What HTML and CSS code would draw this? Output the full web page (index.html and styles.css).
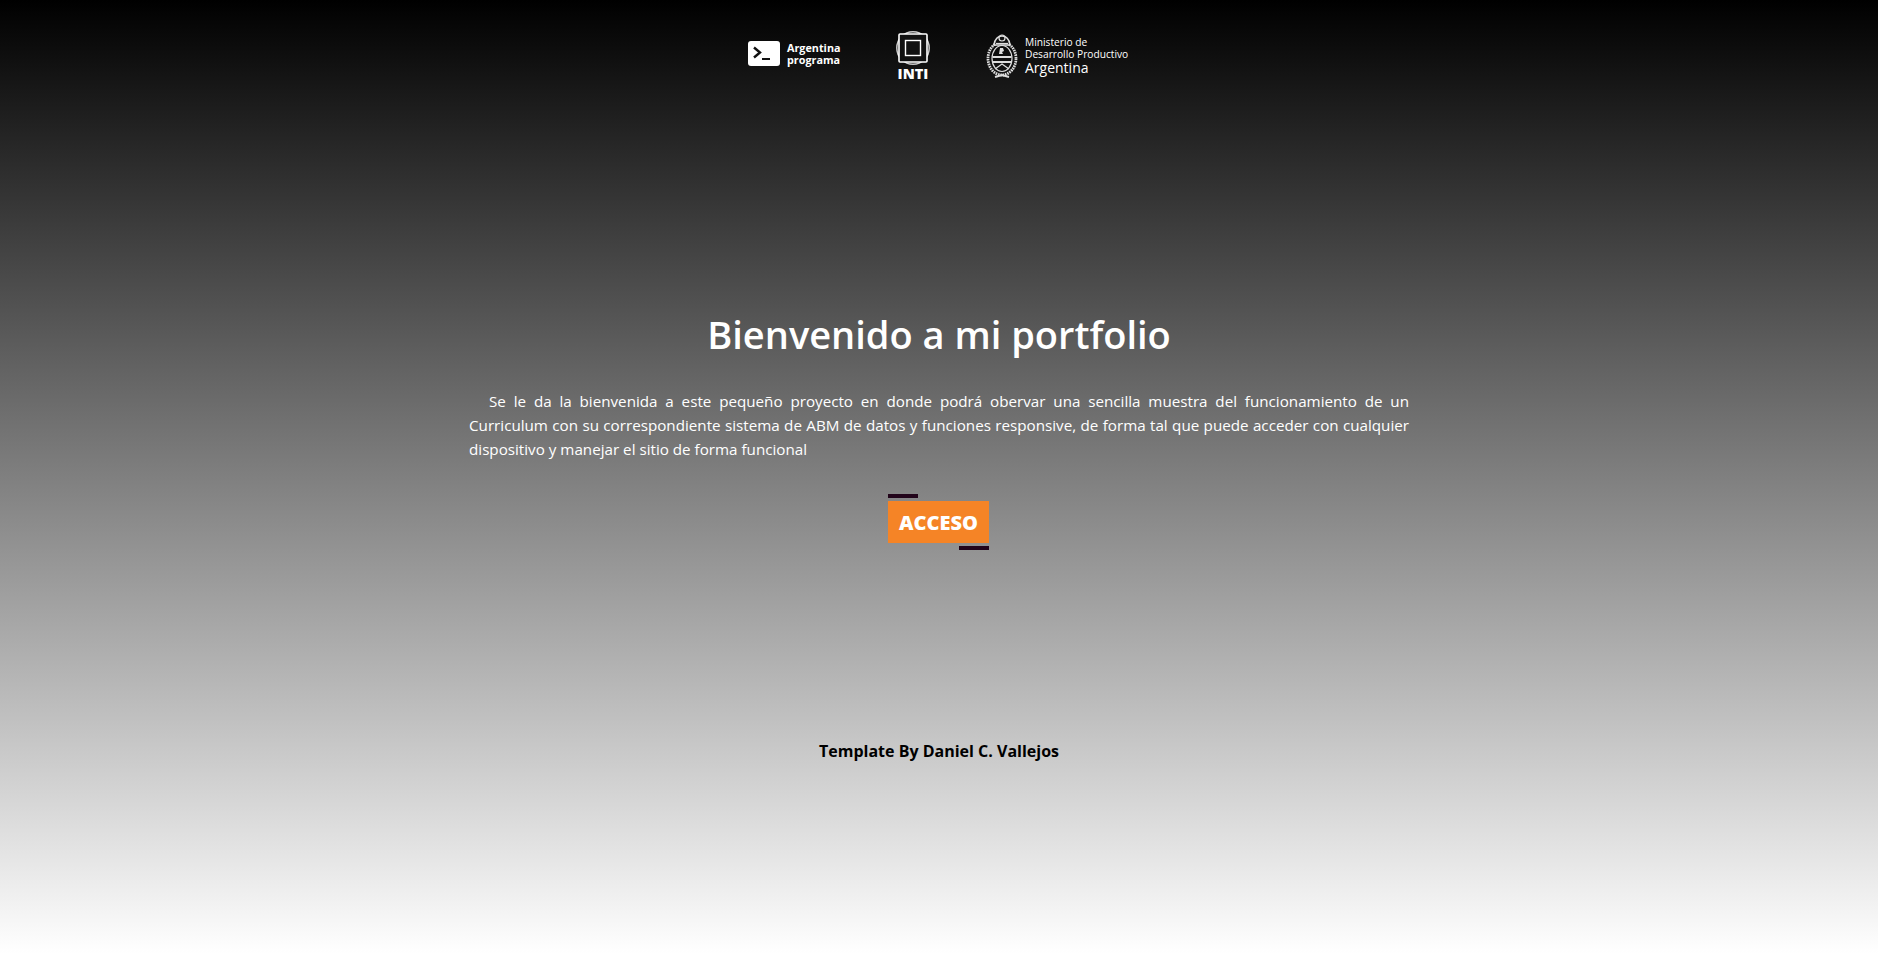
FILE: index.html
```html
<!DOCTYPE html>
<html lang="es">
<head>
<meta charset="utf-8">
<title>Bienvenido a mi portfolio</title>
<link rel="stylesheet" href="styles.css">
</head>
<body>
<header class="logos">
  <div class="logo logo-ap">
    <svg class="ap-icon" width="32" height="25" viewBox="0 0 32 25"><rect width="32" height="25" rx="3" fill="#fff"/><path d="M6 6.5l6 5-6 5" fill="none" stroke="#111" stroke-width="2.4"/><path d="M14 18h8" stroke="#111" stroke-width="2"/></svg>
    <span class="ap-text">Argentina<br>programa</span>
  </div>
  <div class="logo logo-inti">
    <svg width="34" height="34" viewBox="0 0 34 34" fill="none" stroke="#fff"><circle cx="17" cy="17" r="16.2" stroke="#ccc" stroke-width="1.5"/><rect x="3" y="3" width="28" height="28" rx="1" fill="#111" stroke-width="1.6"/><rect x="9.5" y="9.5" width="15" height="15" stroke-width="1.4"/></svg>
    <span class="inti-text">INTI</span>
  </div>
  <div class="logo logo-min">
    <svg width="32" height="49" viewBox="0 0 32 49" fill="none" stroke="#ddd"><ellipse cx="16" cy="27.5" rx="14" ry="16.5" stroke-width="2.8" stroke-dasharray="1.6 0.8"/><ellipse cx="16" cy="27.5" rx="10" ry="13" stroke-width="1.2"/><path d="M6.5 26h19M6.5 31h19" stroke-width="1.8"/><path d="M9 38l7-5 7 5" stroke-width="1.3"/><path d="M13 23l1-6 3 0 1 3-2 1 1 2z" fill="#ddd" stroke="none"/><path d="M8 14c1-12 15-12 16 0z" fill="#111" stroke-width="1.6"/><circle cx="16" cy="7" r="3" stroke-width="1.2"/><path d="M10 12.5h12" stroke-width="1.2"/><path d="M9 46l7-2 7 2" stroke-width="2"/></svg>
    <div class="min-text"><span>Ministerio de</span><span>Desarrollo Productivo</span><span class="min-country">Argentina</span></div>
  </div>
</header>
<main class="welcome">
  <h1 class="title">Bienvenido a mi portfolio</h1>
  <p class="intro">Se le da la bienvenida a este pequeño proyecto en donde podrá obervar una sencilla muestra del funcionamiento de un Curriculum con su correspondiente sistema de ABM de datos y funciones responsive, de forma tal que puede acceder con cualquier dispositivo y manejar el sitio de forma funcional</p>
  <a class="access" href="#">ACCESO</a>
  <p class="credit">Template By Daniel C. Vallejos</p>
</main>
</body>
</html>
```
FILE: styles.css
```css
* { box-sizing: border-box; }
html, body { margin: 0; height: 100%; }
body {
  height: 954px;
  overflow: hidden;
  background: linear-gradient(to bottom, #000 0%, #fff 100%);
  font-family: "Open Sans", "Noto Sans", sans-serif;
  color: #fff;
}
.logos {
  display: flex;
  justify-content: center;
  align-items: flex-start;
  padding: 31px 0 0;
  height: 308px;
}
.logo { display: flex; }
.logo-ap { align-items: center; gap: 7px; margin-top: 10px; width: 148px; }
.ap-text { font-size: 10.8px; font-weight: 700; line-height: 12px; }
.logo-inti { flex-direction: column; align-items: center; width: 34px; }
.inti-text { font-size: 14.5px; font-weight: 800; line-height: 14px; margin-top: 2px; }
.logo-min { margin-left: 56px; gap: 7px; width: 144px; }
.min-text { display: flex; flex-direction: column; font-size: 10.2px; line-height: 12px; font-weight: 500; white-space: nowrap; padding-top: 5px; }
.min-country { font-size: 14px; line-height: 16px; font-weight: 500; }
.welcome { display: flex; flex-direction: column; align-items: center; }
.title { margin: 0; font-size: 38px; line-height: 52px; font-weight: 600; }
.intro {
  width: 940px;
  margin: 29px 0 0;
  font-size: 15.2px;
  line-height: 24px;
  text-align: justify;
  text-indent: 20px;
}
.access {
  position: relative;
  display: block;
  width: 101px;
  height: 42px;
  margin: 40px 1px 0 0;
  background: #f58426;
  color: #fff;
  font-size: 20px;
  font-weight: 800;
  line-height: 43px;
  text-align: center;
  text-decoration: none;
}
.access::before, .access::after {
  content: "";
  position: absolute;
  width: 30px;
  height: 4px;
  background: #22041a;
}
.access::before { left: 0; top: -7px; }
.access::after { right: 0; bottom: -7px; }
.credit { margin: 197px 0 0; color: #000; font-size: 16px; line-height: 22px; font-weight: 700; }
```
